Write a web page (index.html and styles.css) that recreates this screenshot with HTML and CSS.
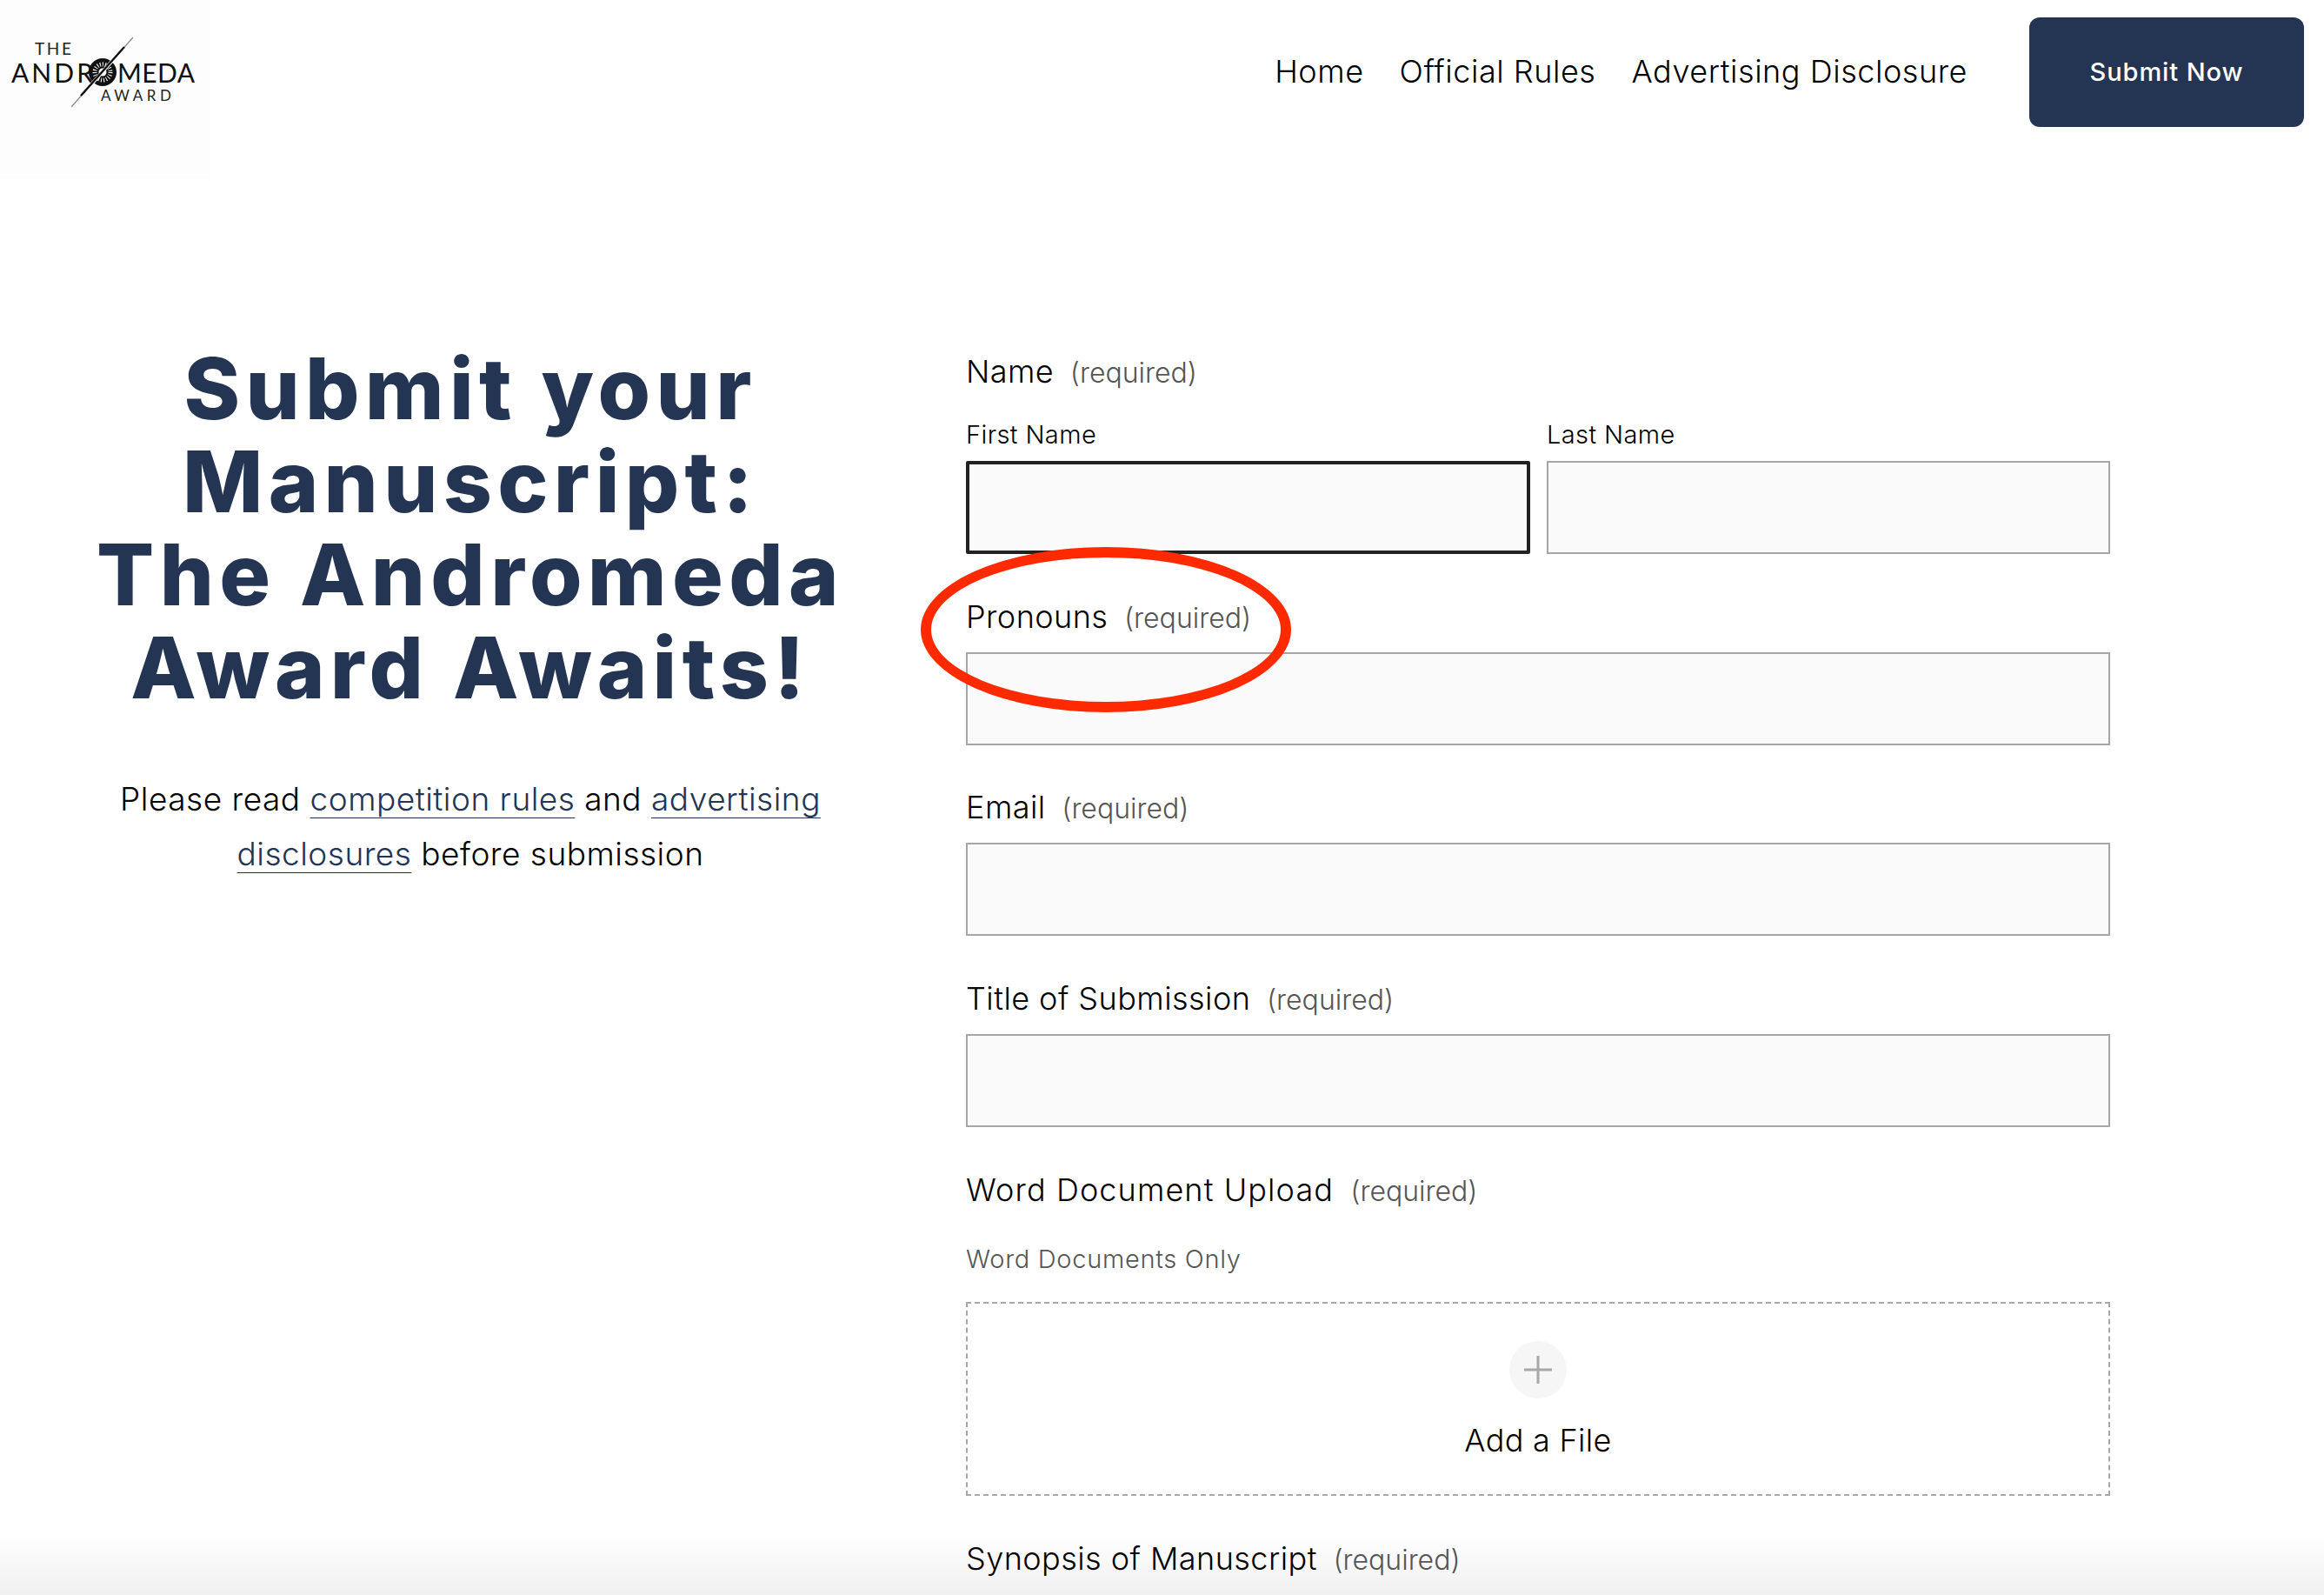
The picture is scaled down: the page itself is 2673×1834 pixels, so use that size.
FILE: index.html
```html
<!DOCTYPE html>
<html lang="en">
<head>
<meta charset="UTF-8">
<meta name="viewport" content="width=device-width, initial-scale=1.0">
<title>Submit your Manuscript</title>
<link rel="stylesheet" href="styles.css">
</head>
<body>

<header class="site-header">
    <a class="logo" href="#">
        <svg width="242" height="205" viewBox="0 0 242 205">
            <text class="logo-small" x="40" y="63" textLength="42">THE</text>
            <text class="logo-big" x="13" y="95" textLength="94">ANDR</text>
            <text class="logo-big" x="135" y="95" textLength="89">MEDA</text>
            <text class="logo-award" x="116" y="116" textLength="81">AWARD</text>
            <circle cx="118" cy="83" r="16" fill="#111"/>
            <circle cx="118" cy="83" r="9" fill="none" stroke="#fdfdfd" stroke-width="5" stroke-dasharray="1 2"/>
            <circle cx="118" cy="83" r="4.5" fill="#fdfdfd"/>
            <path d="M153 43 L82 123" stroke="#fdfdfd" stroke-width="4"/>
            <path d="M153 43 L82 123" stroke="#888" stroke-width="1.2"/>
            <path d="M143 54 L93 110" stroke="#111" stroke-width="2.4"/>
        </svg>
    </a>
    <nav class="site-nav">
        <a href="#">Home</a>
        <a href="#">Official Rules</a>
        <a href="#">Advertising Disclosure</a>
    </nav>
    <a class="submit-btn" href="#">Submit Now</a>
</header>

<main class="page">
    <section class="intro">
        <h1>Submit your Manuscript:<br>The Andromeda<br>Award Awaits!</h1>
        <p>Please read <a href="#">competition rules</a> and <a href="#">advertising disclosures</a> before submission</p>
    </section>

    <form class="form">
        <div class="field">
            <div class="label">Name <span>(required)</span></div>
            <div class="name-row">
                <div>
                    <div class="sublabel">First Name</div>
                    <input class="input active" type="text">
                </div>
                <div>
                    <div class="sublabel">Last Name</div>
                    <input class="input" type="text">
                </div>
            </div>
        </div>
        <div class="field pronouns">
            <div class="label">Pronouns <span>(required)</span></div>
            <input class="input" type="text">
            <div class="circle"></div>
        </div>
        <div class="field">
            <div class="label">Email <span>(required)</span></div>
            <input class="input" type="text">
        </div>
        <div class="field">
            <div class="label">Title of Submission <span>(required)</span></div>
            <input class="input" type="text">
        </div>
        <div class="field upload-field">
            <div class="label wide">Word Document Upload <span>(required)</span></div>
            <div class="note">Word Documents Only</div>
            <div class="upload">
                <div class="plus">
                    <svg width="34" height="34" viewBox="0 0 34 34"><path d="M17 1V33M1 17H33" stroke="#a8a8a8" stroke-width="3"/></svg>
                </div>
                <div class="upload-text">Add a File</div>
            </div>
        </div>
        <div class="field">
            <div class="label">Synopsis of Manuscript <span>(required)</span></div>
        </div>
    </form>
</main>

<div class="fade"></div>

</body>
</html>
```

FILE: styles.css
```css
html, body {
    height: 100%;
}
body {
    margin: 0;
    height: 1834px;
    overflow: hidden;
    position: relative;
    background-color: #fff;
    color: #000;
    font-family: Inter, "Noto Sans", sans-serif;
    font-weight: 280;
}
a {
    color: inherit;
    text-decoration: none;
}

/* header */
.site-header {
    display: flex;
    align-items: flex-start;
    height: 205px;
}
.logo {
    width: 242px;
    height: 205px;
    background-color: #fdfdfd;
}
.logo svg {
    display: block;
}
.logo-small {
    font-family: Lato, sans-serif;
    font-size: 19px;
    font-weight: 400;
    fill: #222;
}
.logo-award {
    font-family: Lato, sans-serif;
    font-size: 17px;
    font-weight: 400;
    fill: #222;
}
.logo-big {
    font-family: Lato, sans-serif;
    font-size: 30px;
    font-weight: 400;
    fill: #111;
}
.site-nav {
    display: flex;
    gap: 41px;
    margin-left: auto;
    margin-top: 58px;
    font-size: 36px;
    line-height: 48px;
    letter-spacing: 0.55px;
}
.submit-btn {
    box-sizing: border-box;
    width: 316px;
    height: 126px;
    padding-bottom: 2px;
    margin: 20px 23px 0 71px;
    display: flex;
    align-items: center;
    justify-content: center;
    background-color: #233553;
    border-radius: 12px;
    color: #fff;
    font-size: 29px;
    font-weight: 500;
    letter-spacing: 0.9px;
}

/* main columns */
.page {
    display: grid;
    grid-template-columns: 882px 1316px;
    column-gap: 129px;
    padding: 188px 0 0 100px;
}
.intro {
    text-align: center;
}
h1 {
    margin: 0 0 66px;
    color: #233553;
    font-size: 98px;
    line-height: 107px;
    font-weight: 800;
    letter-spacing: 6.3px;
}
.intro p {
    margin: 0;
    font-size: 37px;
    line-height: 63px;
    letter-spacing: 0.5px;
}
.intro p a {
    color: #233553;
    text-decoration: underline;
    text-underline-offset: 8px;
    text-decoration-thickness: 1px;
}

/* form */
.form {
    position: relative;
    z-index: 1;
    padding-top: 12px;
}
.field {
    margin-bottom: 50px;
}
.pronouns {
    position: relative;
    margin-bottom: 49px;
}
.label {
    font-size: 36px;
    line-height: 44px;
    letter-spacing: 0.45px;
    margin-bottom: 17px;
}
.label.wide {
    letter-spacing: 1.1px;
}
.label span {
    margin-left: 8px;
    color: #555;
    font-size: 32px;
    letter-spacing: 0;
}
.name-row {
    display: grid;
    grid-template-columns: 649px 648px;
    column-gap: 19px;
    margin-top: 34px;
}
.sublabel {
    font-size: 29px;
    line-height: 30px;
    letter-spacing: 0.4px;
    margin-bottom: 15px;
}
.input {
    display: block;
    box-sizing: border-box;
    width: 100%;
    height: 107px;
    padding: 0;
    background-color: #fafafa;
    border: 2px solid #a6a6a6;
    border-radius: 0;
}
.input.active {
    border: 4px solid #222;
    border-radius: 2px;
}
.note {
    margin: 41px 0 34px;
    color: #555;
    font-size: 29px;
    line-height: 30px;
    letter-spacing: 0.7px;
}
.upload {
    box-sizing: border-box;
    height: 223px;
    padding-top: 43px;
    border: 2px dashed #a8a8a8;
    text-align: center;
}
.plus {
    width: 66px;
    height: 66px;
    margin: 0 auto;
    border-radius: 50%;
    background-color: #f6f6f6;
    display: flex;
    align-items: center;
    justify-content: center;
}
.upload-text {
    margin-top: 23px;
    font-size: 36px;
    line-height: 50px;
    letter-spacing: 0.3px;
}

/* red circle drawn over the pronouns label */
.circle {
    position: absolute;
    left: -52px;
    top: -58px;
    width: 426px;
    height: 190px;
    box-sizing: border-box;
    border: 12px solid #ff2a00;
    border-radius: 50%;
}

/* window fade at the bottom, behind the form */
.fade {
    position: absolute;
    left: 0;
    right: 0;
    bottom: 0;
    height: 70px;
    background: linear-gradient(rgba(240, 240, 240, 0), #f0f0f0);
}
```
